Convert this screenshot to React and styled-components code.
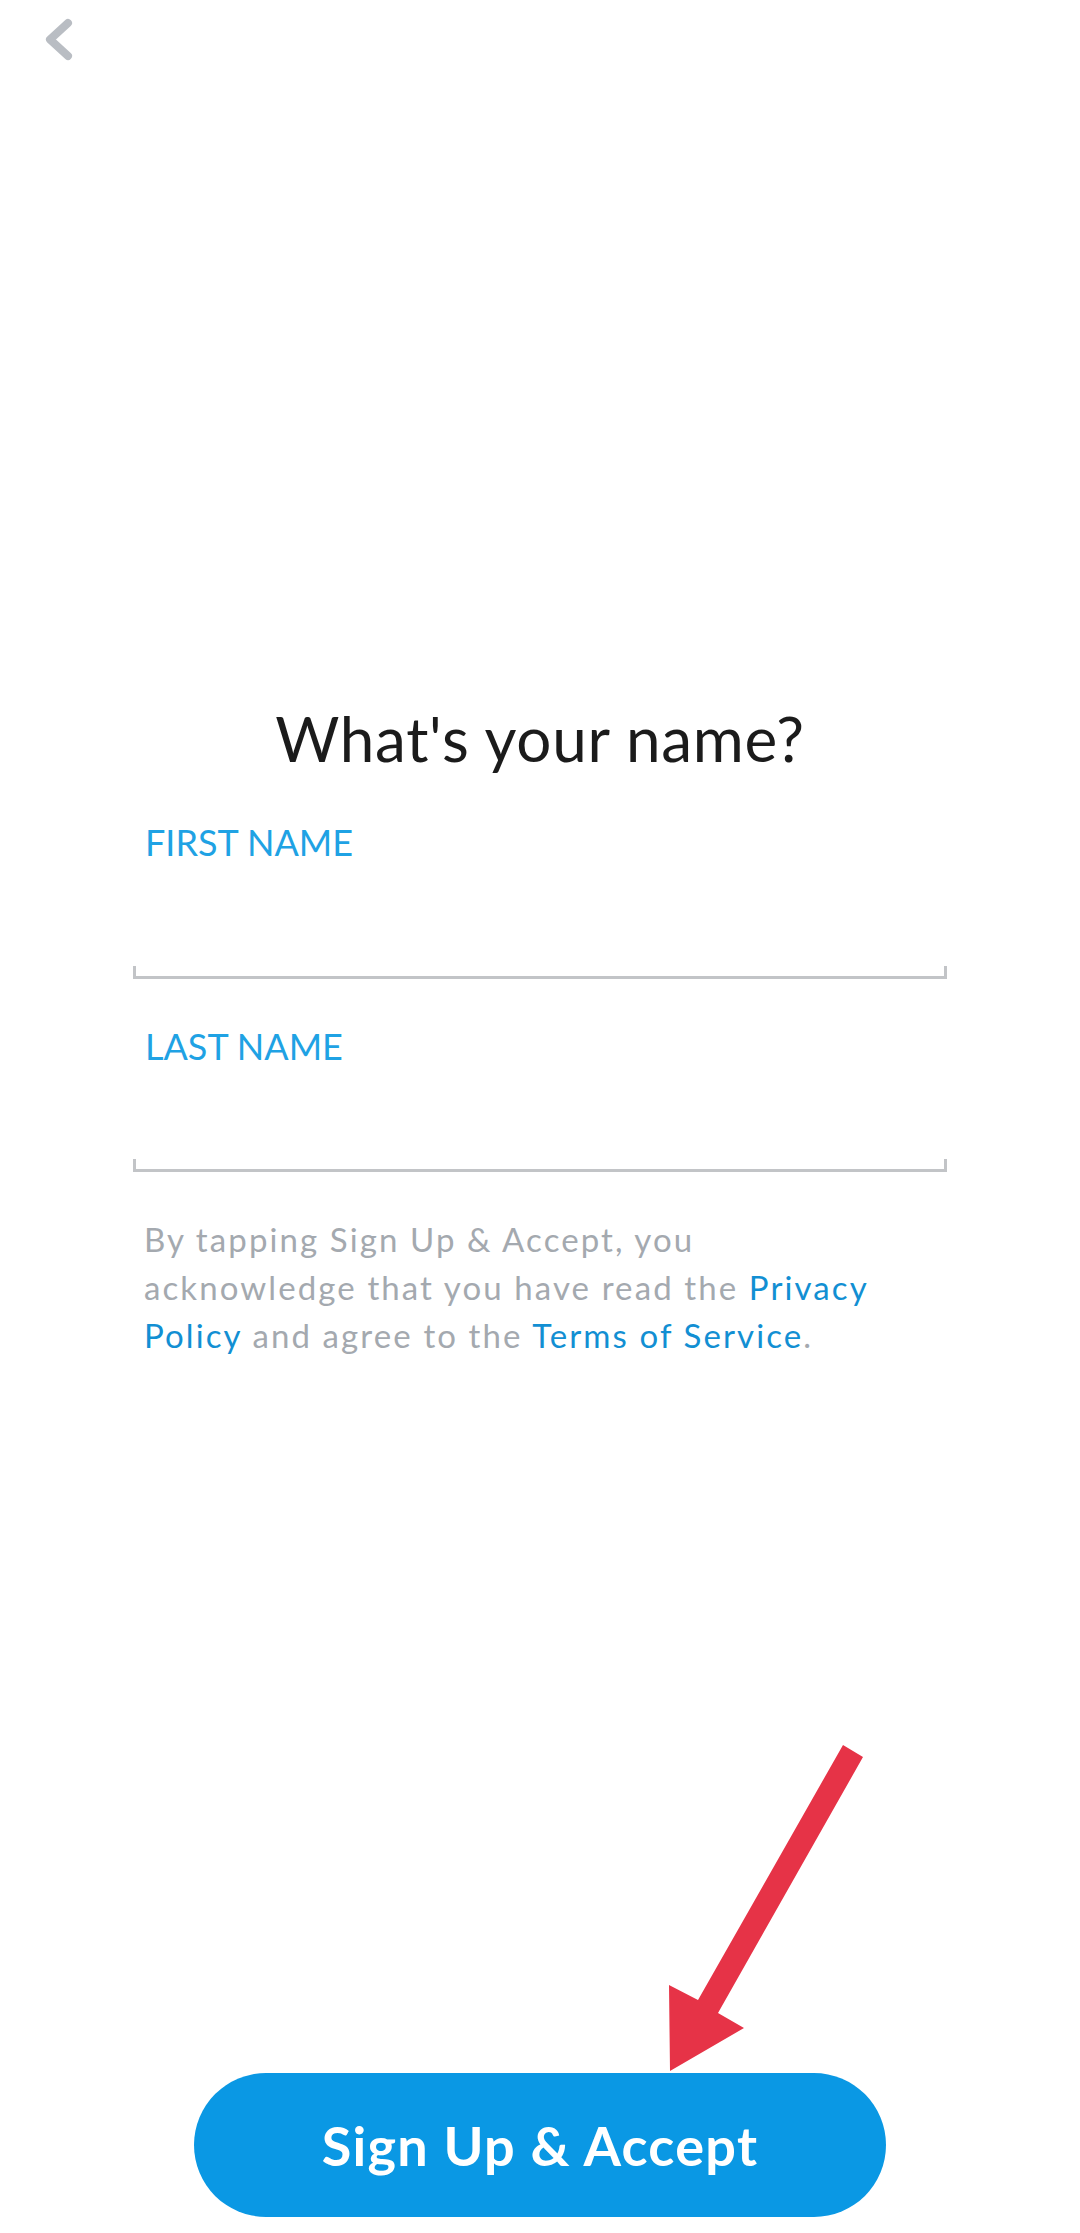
import React from "react"
import styled, { createGlobalStyle } from "styled-components"

const GlobalStyle = createGlobalStyle`
  html,
  body {
    margin: 0;
    padding: 0;
    background: #fff;
  }

  body {
    font-family: Lato, "Open Sans", sans-serif;
    -webkit-font-smoothing: antialiased;
  }
`

const Page = styled.div`
  position: relative;
  width: 1080px;
  height: 2233px;
  display: flex;
  flex-direction: column;
  background: #fff;
  overflow: hidden;
`

const TopBar = styled.header`
  height: 80px;
  padding: 14px 0 0 40px;
  box-sizing: border-box;
`

const BackButton = styled.button`
  display: block;
  width: 40px;
  height: 52px;
  padding: 0;
  border: none;
  background: none;
  cursor: pointer;
`

const Form = styled.form`
  width: 814px;
  margin: 627px auto 0;
  display: flex;
  flex-direction: column;
`

const Title = styled.h1`
  margin: 0 0 55px;
  font-size: 62px;
  line-height: 62px;
  font-weight: 400;
  letter-spacing: 0.7px;
  color: #1b1b1b;
  text-align: center;
`

const Field = styled.label`
  display: flex;
  flex-direction: column;
  margin-bottom: ${(p) => p.$after}px;
`

const Label = styled.span`
  padding-left: 12px;
  font-size: 36px;
  line-height: 36px;
  color: #1fa2e4;
`

const Input = styled.input`
  height: ${(p) => p.$height}px;
  padding: 0 12px;
  border: none;
  outline: none;
  background: transparent;
  font-family: inherit;
  font-size: 40px;
  color: #1b1b1b;
`

// bottom line with the little upturned ends
const Underline = styled.div`
  height: 13px;
  box-sizing: border-box;
  border: 3px solid #c2c4c7;
  border-top: none;
`

const Legal = styled.p`
  margin: 0;
  padding-left: 11px;
  font-size: 33px;
  line-height: 48px;
  letter-spacing: 2.1px;
  color: #a4a9af;
`

const Link = styled.a`
  color: #128fd3;
  text-decoration: none;
`

const Footer = styled.footer`
  margin-top: auto;
  padding-bottom: 16px;
  display: flex;
  justify-content: center;
`

const SubmitButton = styled.button`
  width: 692px;
  height: 144px;
  border: none;
  border-radius: 72px;
  background: #0a98e4;
  color: #fff;
  font-family: Lato, "Open Sans", sans-serif;
  font-size: 54px;
  font-weight: 700;
  letter-spacing: 1.3px;
  cursor: pointer;
`

const Arrow = styled.svg`
  position: absolute;
  left: 640px;
  top: 1730px;
  pointer-events: none;
`

const App = () => {
  return (
    <>
      <GlobalStyle />
      <Page>
        <TopBar>
          <BackButton aria-label="Back">
            <svg width="40" height="52" viewBox="0 0 40 52">
              <polyline
                points="28,9 10,25.5 28,42"
                fill="none"
                stroke="#b9bdc3"
                strokeWidth="8"
                strokeLinecap="round"
                strokeLinejoin="round"
              />
            </svg>
          </BackButton>
        </TopBar>

        <Form onSubmit={(e) => e.preventDefault()}>
          <Title>What's your name?</Title>

          <Field $after={49}>
            <Label>FIRST NAME</Label>
            <Input $height={106} />
            <Underline />
          </Field>

          <Field $after={43}>
            <Label>LAST NAME</Label>
            <Input $height={95} />
            <Underline />
          </Field>

          <Legal>
            By tapping Sign Up &amp; Accept, you
            <br />
            acknowledge that you have read the <Link href="#">Privacy</Link>
            <br />
            <Link href="#">Policy</Link> and agree to the{" "}
            <Link href="#">Terms of Service</Link>.
          </Legal>
        </Form>

        <Footer>
          <SubmitButton>Sign Up &amp; Accept</SubmitButton>
        </Footer>

        <Arrow width="260" height="360" viewBox="0 0 260 360">
          <polygon
            points="203,15 223,27 78,283 104,298 30,341 29,255 58,270"
            fill="#e63347"
          />
        </Arrow>
      </Page>
    </>
  )
}

export default App
